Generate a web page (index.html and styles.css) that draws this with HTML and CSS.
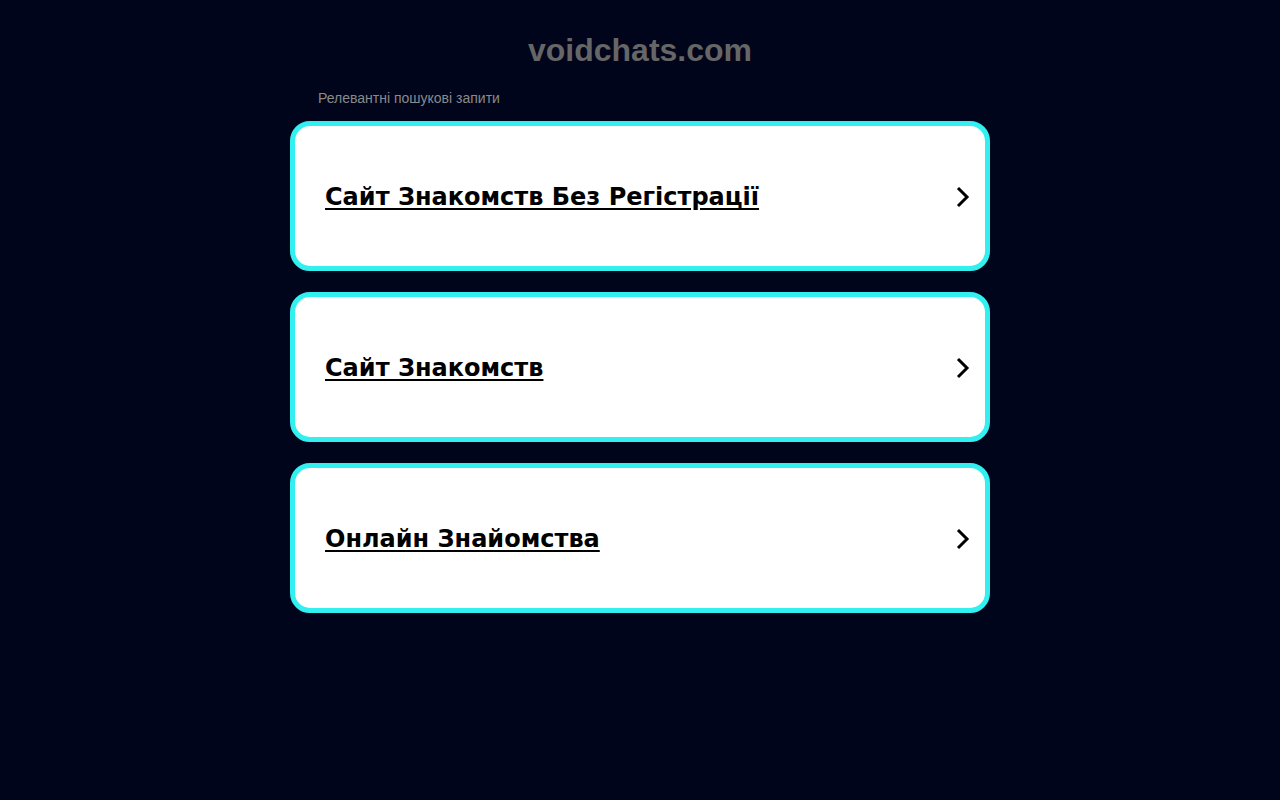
FILE: index.html
```html
<!DOCTYPE html>
<html lang="uk">
<head>
    <meta charset="UTF-8">
    <meta name="viewport" content="width=device-width, initial-scale=1.0">
    <title>voidchats.com</title>
    <link rel="stylesheet" href="styles.css">
</head>
<body>
    <div class="container">
        <h1 class="domain">voidchats.com</h1>
        <p class="related">Релевантні пошукові запити</p>

        <a class="card" href="#">
            <span class="card-text">Сайт Знакомств Без Регістрації</span>
            <svg class="chevron" width="16" height="24" viewBox="0 0 16 24"><path d="M3 3 L12 12 L3 21" fill="none" stroke="#000" stroke-width="3"/></svg>
        </a>
        <a class="card" href="#">
            <span class="card-text">Сайт Знакомств</span>
            <svg class="chevron" width="16" height="24" viewBox="0 0 16 24"><path d="M3 3 L12 12 L3 21" fill="none" stroke="#000" stroke-width="3"/></svg>
        </a>
        <a class="card" href="#">
            <span class="card-text">Онлайн Знайомства</span>
            <svg class="chevron" width="16" height="24" viewBox="0 0 16 24"><path d="M3 3 L12 12 L3 21" fill="none" stroke="#000" stroke-width="3"/></svg>
        </a>
    </div>
</body>
</html>
```

FILE: styles.css
```css
body {
    margin: 0;
    background: #00051c;
    font-family: "Liberation Sans", Arial, sans-serif;
}
.container {
    width: 700px;
    margin: 0 auto;
    padding-top: 30px;
    display: flex;
    flex-direction: column;
}
.domain {
    margin: 0;
    text-align: center;
    color: #666666;
    font-size: 32px;
    font-weight: bold;
    line-height: 40px;
}
.related {
    margin: 18px 0 13px 28px;
    color: #8a8a8a;
    font-size: 14px;
    line-height: 20px;
}
.card {
    display: flex;
    align-items: center;
    justify-content: space-between;
    height: 138px;
    margin-bottom: 21px;
    padding: 2px 14px 0 30px;
    box-sizing: content-box;
    background: #ffffff;
    border: 5px solid #33f0f0;
    border-radius: 20px;
    color: #000;
    text-decoration: none;
}
.card-text {
    font-family: "DejaVu Sans", Verdana, sans-serif;
    font-weight: bold;
    font-size: 24px;
    text-decoration: underline;
    text-decoration-thickness: 2px;
    text-underline-offset: 3px;
}
.chevron {
    display: block;
}
```
